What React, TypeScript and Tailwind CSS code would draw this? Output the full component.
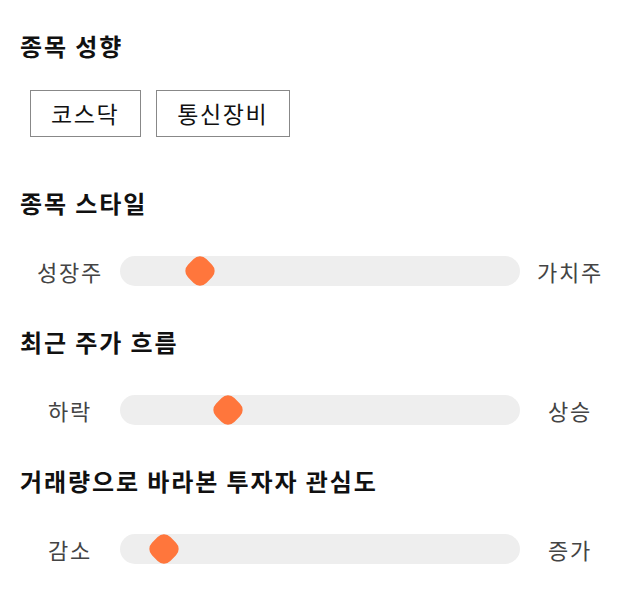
import React from "react"

const font = "font-['Noto_Sans_CJK_KR','Noto_Sans',sans-serif]"

const tags = ["코스닥", "통신장비"]

const sliders = [
    { title: "종목 스타일", left: "성장주", right: "가치주", value: 20 },
    { title: "최근 주가 흐름", left: "하락", right: "상승", value: 27 },
    { title: "거래량으로 바라본 투자자 관심도", left: "감소", right: "증가", value: 11 },
]

const SectionTitle = ({ children }: { children: React.ReactNode }) => {
    return <h2 className="text-[24px] leading-[32px] font-bold tracking-[1.9px] text-[#111]">
        {children}
    </h2>
}

const Slider = ({ left, right, value }: { left: string, right: string, value: number }) => {
    return <div className="flex items-center h-[30px]">
        <div className="w-[100px] text-center text-[22px] leading-[30px] tracking-[1.8px] text-[#444]">
            {left}
        </div>
        <div className="relative flex-1 h-[30px] rounded-full bg-[#eeeeee]">
            <div
                className="absolute top-1/2 w-[26px] h-[26px] -translate-x-1/2 -translate-y-1/2 rotate-45 rounded-[9px] bg-[#ff763c]"
                style={{ left: `${value}%` }}
            />
        </div>
        <div className="w-[100px] text-center text-[22px] leading-[30px] tracking-[1.8px] text-[#444]">
            {right}
        </div>
    </div>
}

const App = () => {
    return <div className={`${font} bg-white min-h-[606px] px-5 pt-[30px]`}>
        <SectionTitle>종목 성향</SectionTitle>
        <div className="flex gap-[15px] mt-[28px] pl-[10px]">
            {tags.map(tag =>
                <span
                    key={tag}
                    className="inline-flex items-center h-[47px] pl-[20px] pr-[21px] border border-[#888] text-[23px] tracking-[1.6px] text-[#111]"
                >
                    {tag}
                </span>
            )}
        </div>
        {sliders.map((s, i) =>
            <div key={s.title} className={i === 0 ? "mt-[50px]" : "mt-[40px]"}>
                <SectionTitle>{s.title}</SectionTitle>
                <div className="mt-[37px]">
                    <Slider left={s.left} right={s.right} value={s.value} />
                </div>
            </div>
        )}
    </div>
}

export default App
